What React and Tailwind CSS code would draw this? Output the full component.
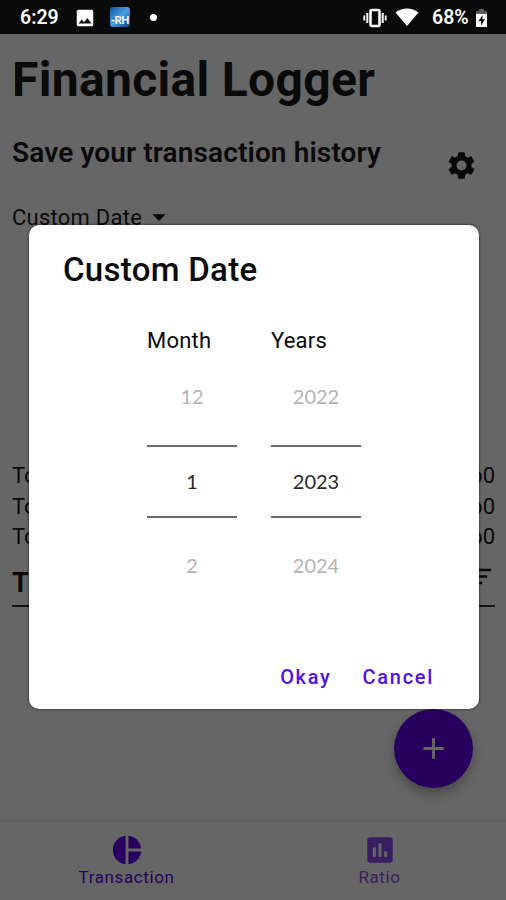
import React, { useState } from "react";
import {
  MdAdd,
  MdArrowDropDown,
  MdAssessment,
  MdFilterList,
  MdImage,
  MdPieChart,
  MdSettings,
} from "react-icons/md";

const SUMMARY = [
  { label: "Total Income", value: "Rp0" },
  { label: "Total Expense", value: "Rp0" },
  { label: "Total Balance", value: "Rp0" },
];

const MONTHS = ["12", "1", "2"];
const YEARS = ["2022", "2023", "2024"];

export default function App() {
  const [open, setOpen] = useState(true);

  return (
    <div className="relative w-[506px] h-[900px] overflow-hidden bg-white font-[Roboto,sans-serif] text-[#1c1b1c] flex flex-col">
      <StatusBar />

      <main className="flex-1 pl-3 pr-[11px] flex flex-col">
        <h1 className="mt-[18px] text-[48px] leading-[56px] font-bold whitespace-nowrap tracking-[0.32px]">
          Financial Logger
        </h1>
        <div className="flex justify-between mt-[29px] pr-[17px]">
          <h2 className="text-[28px] leading-8 font-semibold whitespace-nowrap tracking-[0.13px]">
            Save your transaction history
          </h2>
          <button aria-label="Settings" className="mt-[12px] h-8">
            <MdSettings className="text-[33px]" />
          </button>
        </div>
        <button
          onClick={() => setOpen(true)}
          className="flex items-center self-start mt-[20px] h-8 text-[22px] tracking-[0.25px] whitespace-nowrap"
        >
          Custom Date
          <MdArrowDropDown className="text-[32px] ml-[1px]" />
        </button>

        <dl className="mt-[228px] text-[22px]">
          {SUMMARY.map((row) => (
            <div key={row.label} className="flex justify-between h-[30.5px] leading-[30px]">
              <dt>{row.label}</dt>
              <dd>{row.value}</dd>
            </div>
          ))}
        </dl>
        <div className="flex items-end justify-between h-[54px] border-b-2 border-[#333]">
          <h3 className="text-[27px] leading-8 font-bold pb-[6px]">Transactions</h3>
          <MdFilterList className="text-[31px] mb-[13px]" />
        </div>

        <button
          aria-label="Add transaction"
          className="self-end mt-[102px] mr-[22px] size-[79px] rounded-full bg-[#6200ee] text-white flex items-center justify-center shadow-[0_6px_12px_rgba(0,0,0,0.3)]"
        >
          <MdAdd className="text-[35px]" />
        </button>
      </main>

      <nav className="h-[81px] shrink-0 border-t-3 border-[#f0f0f0] grid grid-cols-2 text-[17px] tracking-[0.6px] text-[#6200ee]">
        <NavItem icon={MdPieChart} label="Transaction" active />
        <NavItem icon={MdAssessment} label="Ratio" />
      </nav>

      {open && <DateDialog onClose={() => setOpen(false)} />}
    </div>
  );
}

function StatusBar() {
  return (
    <header className="relative z-20 h-[34px] shrink-0 bg-[#0a0a0a] text-white flex items-center pt-[1px] pl-5 pr-[18px] text-[19.5px] font-semibold">
      <span className="w-[38px] pt-[1px] whitespace-nowrap">6:29</span>
      <MdImage className="ml-[16px] text-[22px]" />
      <span className="ml-[14px] mb-[2px] size-5 rounded-[3px] bg-gradient-to-br from-[#12559f] via-[#4ba0e4] to-[#123d86] flex items-end justify-center text-[11px] leading-[13px] tracking-tight">
        -RH
      </span>
      <span className="ml-[20px] size-[7px] rounded-full bg-white" />

      <svg className="ml-auto" width="24" height="20" viewBox="0 0 24 20" fill="none" stroke="white">
        <rect x="7.5" y="2" width="9" height="16" rx="1.5" strokeWidth="2.6" />
        <path d="M4.3 5v10M19.7 5v10" strokeWidth="2" />
        <path d="M1.3 7.5v5M22.7 7.5v5" strokeWidth="1.8" />
      </svg>
      <svg className="ml-2" width="24" height="20" viewBox="0 0 24 20" fill="white">
        <path d="M.5 4.5C7-.7 17-.7 23.5 4.5L12 18z" />
      </svg>
      <span className="ml-[13px] w-[38px] pt-[1px] whitespace-nowrap">68%</span>
      <svg className="ml-[5px]" width="13" height="20" viewBox="0 0 13 20">
        <path d="M4 1h5v2h3v4H1V3h3z" fill="#5c5c5c" />
        <path d="M1 6h11v13H1z" fill="white" />
        <path d="M7.6 7L3.5 13h2.6v4.5L10 11.3H7.4z" fill="#0a0a0a" />
      </svg>
    </header>
  );
}

function NavItem({ icon: Icon, label, active }) {
  return (
    <button className={`flex flex-col items-center justify-start pt-[11px] ${active ? "" : "opacity-70"}`}>
      <Icon className="text-[34px]" />
      <span className="leading-5">{label}</span>
    </button>
  );
}

function DateDialog({ onClose }) {
  return (
    <div className="absolute inset-0 z-10 bg-black/60 pt-[225px] pl-[28.5px]">
      <section
        role="dialog"
        aria-label="Custom Date"
        className="w-[450px] h-[484px] rounded-[10px] bg-white text-[#0a0a0a] shadow-[0_0_3px_rgba(0,0,0,0.7)] flex flex-col"
      >
        <h2 className="pl-[34.5px] pt-[25px] text-[33px] leading-10 font-medium tracking-[0.3px]">Custom Date</h2>
        <div className="flex gap-[34px] pl-[118.5px] mt-[35px]">
          <Picker title="Month" values={MONTHS} />
          <Picker title="Years" values={YEARS} />
        </div>
        <div className="mt-auto pb-[16px] pr-[44.5px] flex justify-end gap-[31px] text-[20px] leading-8 font-medium tracking-[1.7px] text-[#5210e6]">
          <button onClick={onClose}>Okay</button>
          <button onClick={onClose}>Cancel</button>
        </div>
      </section>
    </div>
  );
}

function Picker({ title, values }) {
  const [prev, current, next] = values;

  return (
    <div className="w-[90px]">
      <h3 className="text-[22px] leading-8 tracking-[0.2px]">{title}</h3>
      <div className="mt-[24px] text-center font-[Lato,sans-serif] text-[20px] leading-[30px]">
        <div className="text-[#b4b4b4]">{prev}</div>
        <div className="mt-[34px] mb-[32px] h-[73px] pb-[2px] border-y-2 border-[#6b6b6b] flex items-center justify-center text-[#2a2a2a]">
          {current}
        </div>
        <div className="text-[#b4b4b4]">{next}</div>
      </div>
    </div>
  );
}
